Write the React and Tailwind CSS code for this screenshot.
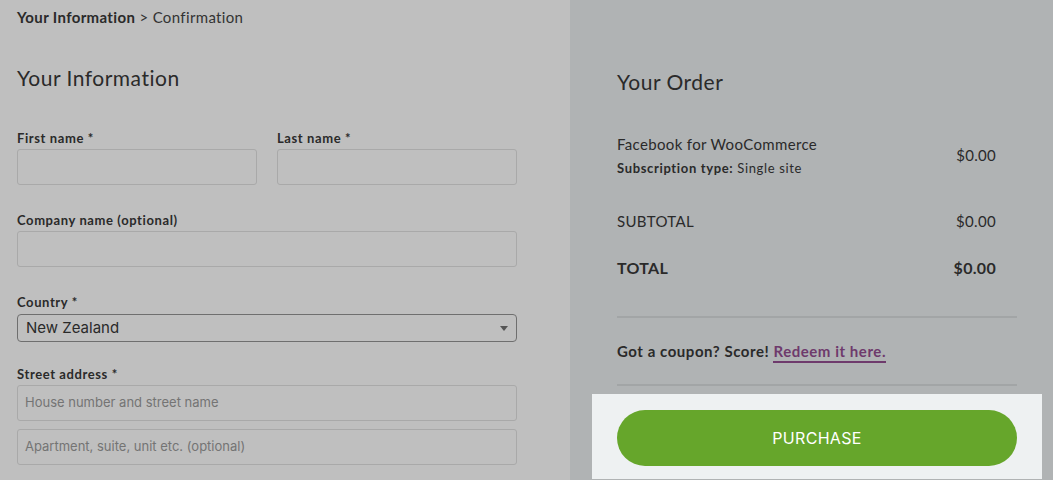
import React from 'react'

const font = { fontFamily: 'Lato, "Open Sans", Arial, sans-serif' }

function Field({ label, placeholder, className = '' }) {
  return (
    <div className={className}>
      {label && (
        <p className="text-[13px] font-bold tracking-[0.6px] text-[#2a2a2a] leading-4 mb-[3px]">{label}</p>
      )}
      <div className="h-[36px] rounded-[3px] border border-[#a9a9a9] flex items-center px-[7px]">
        {placeholder && (
          <span className="text-[13px] text-[#747474] font-['Inter',sans-serif]">{placeholder}</span>
        )}
      </div>
    </div>
  )
}

export default function App() {
  return (
    <div className="flex w-[1053px] h-[480px] overflow-hidden text-[#2a2a2a]" style={font}>
      {/* Left: customer info form */}
      <div className="w-[570px] shrink-0 bg-[#bfbfbf] pl-[17px] pr-[53px]">
        <p className="pt-[8px] text-[15px] leading-[18px] tracking-[0.35px]">
          <span className="font-bold">Your Information</span>
          <span className="text-[#333]"> &gt; Confirmation</span>
        </p>
        <h2 className="mt-[39px] text-[21px] leading-[26px] tracking-[0.5px] text-[#2a2a2a]">Your Information</h2>

        <div className="mt-[39px] grid grid-cols-2 gap-x-[20px]">
          <Field label="First name *" />
          <Field label="Last name *" />
        </div>
        <Field label="Company name (optional)" className="mt-[27px]" />

        <div className="mt-[27px]">
          <p className="text-[13px] font-bold tracking-[0.6px] leading-4 mb-[4px]">Country *</p>
          <div className="h-[28px] rounded-[4px] border border-[#6f6f6f] flex items-center justify-between pl-[8px] pr-[8px]">
            <span className="text-[15px] text-[#2a2a2a] font-['Inter',sans-serif]">New Zealand</span>
            <span className="w-0 h-0 border-l-[4px] border-r-[4px] border-t-[5px] border-l-transparent border-r-transparent border-t-[#555]" />
          </div>
        </div>

        <div className="mt-[24px]">
          <p className="text-[13px] font-bold tracking-[0.6px] leading-4 mb-[3px]">Street address *</p>
          <Field placeholder="House number and street name" />
          <Field placeholder="Apartment, suite, unit etc. (optional)" className="mt-[8px]" />
        </div>
      </div>

      {/* Right: order summary */}
      <div className="flex-1 bg-[#b0b3b4] pl-[47px] pr-[36px]">
        <h2 className="mt-[69px] text-[21px] leading-[26px] tracking-[0.5px]">Your Order</h2>

        <div className="mt-[39px] flex items-center justify-between pr-[21px]">
          <div>
            <p className="text-[15px] leading-[20px] tracking-[0.35px]">Facebook for WooCommerce</p>
            <p className="text-[13px] leading-[16px] mt-[6px] tracking-[0.65px]">
              <span className="font-bold">Subscription type:</span> Single site
            </p>
          </div>
          <span className="text-[15px] tracking-[0.3px]">$0.00</span>
        </div>

        <div className="mt-[35px] flex justify-between pr-[21px] text-[15px] leading-[20px] tracking-[0.35px]">
          <span>SUBTOTAL</span>
          <span>$0.00</span>
        </div>
        <div className="mt-[27px] flex justify-between pr-[21px] text-[16px] leading-[20px] font-bold tracking-[0.3px]">
          <span>TOTAL</span>
          <span>$0.00</span>
        </div>

        <div className="mt-[38px] h-[2px] bg-[#a2a5a6]" />
        <p className="mt-[23px] text-[15px] font-bold leading-[20px] tracking-[0.55px]">
          Got a coupon? Score!{' '}
          <a className="text-[#6e3a6c] border-b-2 border-[#6e3a6c] pb-[1px]">Redeem it here.</a>
        </p>
        <div className="mt-[23px] h-[2px] bg-[#a2a5a6]" />

        <div className="mt-[8px] -mx-[25px] px-[25px] pt-[16px] pb-[13px] bg-[#eef1f2]">
          <button className="w-full h-[56px] rounded-full bg-[#66a62b] text-white text-[16px] tracking-[0.3px] font-['Inter',sans-serif]">
            PURCHASE
          </button>
        </div>
      </div>
    </div>
  )
}
